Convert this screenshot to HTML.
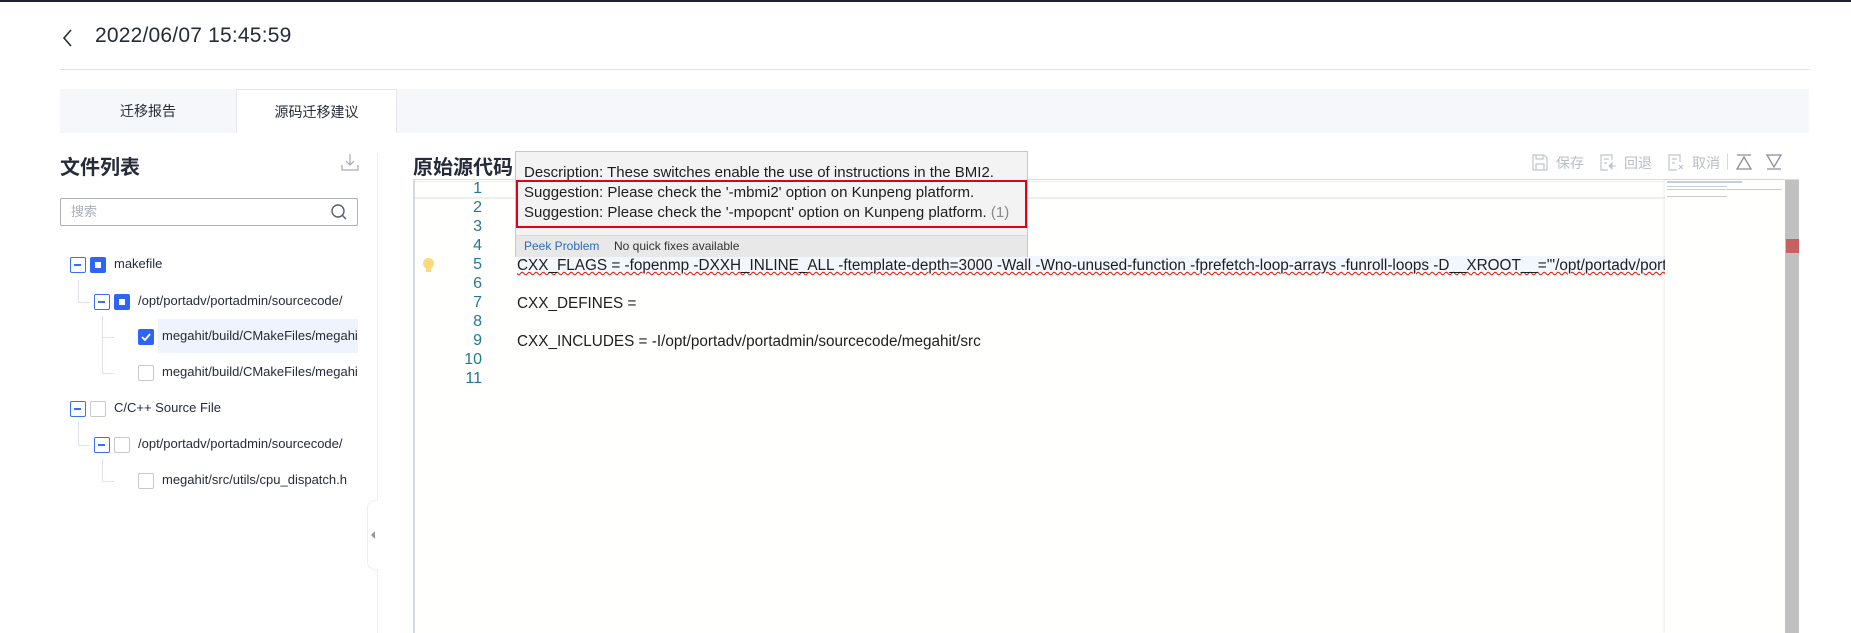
<!DOCTYPE html>
<html><head><meta charset="utf-8">
<style>
*{margin:0;padding:0;box-sizing:border-box}
body{width:1851px;height:633px;overflow:hidden;background:#fff;font-family:"Liberation Sans","Noto Sans CJK SC",sans-serif;color:#252b3a;position:relative}
.a{position:absolute}
.topbar{left:0;top:0;width:1851px;height:2px;background:#1b2430}
.title{left:95px;top:24px;font-size:21px;color:#252b3a;letter-spacing:0.2px}
.hr{left:60px;top:69px;width:1750px;height:1px;background:#dfe1e6}
.tabs{left:60px;top:89px;width:1749px;height:44px;background:#f5f7fb}
.tab{position:absolute;top:0;height:44px;line-height:44px;font-size:14px;text-align:center;color:#252b3a}
.h2{font-size:20px;font-weight:bold;color:#252b3a}
.search{left:60px;top:198px;width:298px;height:28px;border:1px solid #aeb1b8;border-radius:2px;font-size:13px;color:#adb0b8;padding-left:10px;line-height:26px}
.tree{font-size:13px;color:#252b3a;white-space:nowrap}
.mb{position:absolute;width:16px;height:16px;border:1.5px solid #3a6ff3;border-radius:2px;background:#fff}
.mb:after{content:"";position:absolute;left:3px;top:6px;width:7px;height:1.5px;background:#3a6ff3}
.fb{position:absolute;width:16px;height:16px;background:#2d65f5;border-radius:2px}
.fb:after{content:"";position:absolute;left:5px;top:5px;width:6px;height:6px;background:#fff}
.eb{position:absolute;width:16px;height:16px;border:1px solid #c6c9cf;border-radius:2px;background:#fff}
.ln{position:absolute;width:1px;background:#dfe1e6}
.lh{position:absolute;height:1px;background:#dfe1e6}
.editor{left:413px;top:179px;width:1386px;height:454px;background:#fffffd;border-left:2px solid #d5d9e6;border-top:1px solid #dcdde6}
.num{position:absolute;width:40px;text-align:right;font-size:16px;color:#237893;left:442px}
.code{position:absolute;left:517px;font-size:15.3px;color:#1e1e1e;white-space:nowrap}
.hover{left:515px;top:151px;width:513px;height:106px;background:#f3f3f3;border:1px solid #c8c8c8;font-size:15px;color:#1e1e1e}
.tb{font-size:14px;color:#b9bdc8}
</style></head><body>
<div class="a topbar"></div>
<svg class="a" style="left:62px;top:28px" width="12" height="20"><path d="M9 2 L2 10 L9 18" fill="none" stroke="#252b3a" stroke-width="1.6"/></svg>
<div class="a title">2022/06/07 15:45:59</div>
<div class="a hr"></div>
<div class="a tabs">
 <div class="tab" style="left:0;width:176px">迁移报告</div>
 <div class="tab" style="left:176px;width:161px;background:#fff;border:1px solid #e6e8ee;border-bottom:none">源码迁移建议</div>
</div>
<div class="a h2" style="left:60px;top:151px">文件列表</div>
<svg class="a" style="left:341px;top:153px" width="18" height="19"><path d="M9 1V12M5 8L9 12L13 8M1 12V17H17V12" fill="none" stroke="#a6a9b0" stroke-width="1.2"/></svg>
<div class="a" style="left:377px;top:153px;width:1px;height:480px;background:#eceef2"></div>
<div class="a search">搜索</div>
<svg class="a" style="left:330px;top:203px" width="18" height="18"><circle cx="8" cy="8" r="6" fill="none" stroke="#575d6c" stroke-width="1.4"/><path d="M12.5 12.5L16 16" stroke="#575d6c" stroke-width="1.4"/></svg>

<div class="a tree" style="left:0;top:0">
 <div class="mb" style="left:70px;top:257px"></div><div class="fb" style="left:90px;top:257px"></div>
 <div class="a" style="left:114px;top:256px">makefile</div>
 <div class="ln" style="left:78px;top:280px;height:22px"></div><div class="lh" style="left:78px;top:302px;width:12px"></div>
 <div class="mb" style="left:94px;top:294px"></div><div class="fb" style="left:114px;top:294px"></div>
 <div class="a" style="left:138px;top:293px">/opt/portadv/portadmin/sourcecode/</div>
 <div class="ln" style="left:102px;top:316px;height:57px"></div><div class="lh" style="left:102px;top:337px;width:12px"></div><div class="lh" style="left:102px;top:373px;width:12px"></div>
 <div class="a" style="left:158px;top:319px;width:200px;height:34px;background:#eef3fd"></div>
 <div class="a" style="left:138px;top:329px;width:16px;height:16px;background:#2d65f5;border-radius:2px"><svg width="16" height="16"><path d="M4 8L7 11L12 5" fill="none" stroke="#fff" stroke-width="1.8"/></svg></div>
 <div class="a" style="left:162px;top:328px;width:196px;overflow:hidden">megahit/build/CMakeFiles/megahit</div>
 <div class="eb" style="left:138px;top:365px"></div>
 <div class="a" style="left:162px;top:364px;width:196px;overflow:hidden">megahit/build/CMakeFiles/megahit</div>
 <div class="mb" style="left:70px;top:401px"></div><div class="eb" style="left:90px;top:401px"></div>
 <div class="a" style="left:114px;top:400px">C/C++ Source File</div>
 <div class="ln" style="left:78px;top:422px;height:23px"></div><div class="lh" style="left:78px;top:445px;width:12px"></div>
 <div class="mb" style="left:94px;top:437px"></div><div class="eb" style="left:114px;top:437px"></div>
 <div class="a" style="left:138px;top:436px">/opt/portadv/portadmin/sourcecode/</div>
 <div class="ln" style="left:102px;top:459px;height:22px"></div><div class="lh" style="left:102px;top:481px;width:12px"></div>
 <div class="eb" style="left:138px;top:473px"></div>
 <div class="a" style="left:162px;top:472px">megahit/src/utils/cpu_dispatch.h</div>
</div>
<div class="a" style="left:367px;top:500px;width:11px;height:70px;background:#fff;border:1px solid #eceef2;border-right:none;border-radius:8px 0 0 8px"></div>
<div class="a" style="left:371px;top:531px;width:0;height:0;border-top:4px solid transparent;border-bottom:4px solid transparent;border-right:4px solid #9096a3"></div>

<div class="a h2" style="left:413px;top:151px">原始源代码</div>
<svg class="a" style="left:1532px;top:154px" width="16" height="17"><path d="M1 1H12L15 4V16H1Z M4 1V5H11V1 M4 16V10H12V16" fill="none" stroke="#c0c4cf" stroke-width="1.2"/></svg>
<div class="a tb" style="left:1556px;top:153px">保存</div>
<svg class="a" style="left:1600px;top:154px" width="17" height="17"><path d="M12 6V1H1V16H8 M4 5H9 M4 9H7" fill="none" stroke="#c0c4cf" stroke-width="1.2"/><path d="M9 12L12 9V15Z M12 12H16" fill="#c0c4cf" stroke="#c0c4cf"/></svg>
<div class="a tb" style="left:1624px;top:153px">回退</div>
<svg class="a" style="left:1668px;top:154px" width="17" height="17"><path d="M12 8V1H1V16H9 M4 5H9 M4 9H7 M11 11L15 15M15 11L11 15" fill="none" stroke="#c0c4cf" stroke-width="1.2"/></svg>
<div class="a tb" style="left:1692px;top:153px">取消</div>
<div class="a" style="left:1727px;top:154px;width:1px;height:16px;background:#d5d8de"></div>
<svg class="a" style="left:1736px;top:154px" width="16" height="16"><path d="M1 1H15M8 3L15 15H1Z" fill="none" stroke="#8a8e99" stroke-width="1.3"/></svg>
<svg class="a" style="left:1766px;top:154px" width="16" height="16"><path d="M1 1H15L8 13Z M1 15H15" fill="none" stroke="#8a8e99" stroke-width="1.3"/></svg>

<div class="a editor"></div>
<div class="a" style="left:415px;top:181px;width:1250px;height:18px;border-top:1px solid #eeeeee;border-bottom:2px solid #eeeeee"></div>
<div class="a" style="left:517px;top:256px;width:1148px;height:20px;background:#f2f6fd"></div>
<div class="a" style="left:1665px;top:180px;width:120px;height:453px;background:#fffffd;box-shadow:-1px 0 3px rgba(0,0,0,0.08)"></div>
<div class="a" style="left:1667px;top:181px;width:75px;height:2px;background:#c8cce0"></div>
<div class="a" style="left:1667px;top:186px;width:60px;height:1px;background:#c8cce0"></div>
<div class="a" style="left:1667px;top:189px;width:115px;height:1px;background:#ccc"></div>
<div class="a" style="left:1667px;top:196px;width:60px;height:1px;background:#ccc"></div>
<div class="a" style="left:1785px;top:180px;width:14px;height:453px;background:#c1c1c1"></div>
<div class="a" style="left:1786px;top:239px;width:13px;height:14px;background:#c76060"></div>

<div class="num" style="top:180px">1</div>
<div class="num" style="top:199px">2</div>
<div class="num" style="top:218px">3</div>
<div class="num" style="top:237px">4</div>
<div class="num" style="top:256px">5</div>
<div class="num" style="top:275px">6</div>
<div class="num" style="top:294px">7</div>
<div class="num" style="top:313px">8</div>
<div class="num" style="top:332px">9</div>
<div class="num" style="top:351px">10</div>
<div class="num" style="top:370px">11</div>
<div class="a" style="left:423px;top:258px;width:11px;height:11px;border-radius:50%;background:#fcd97a"></div>
<div class="a" style="left:426px;top:268px;width:5px;height:4px;background:#fcd97a"></div>
<div class="a" style="left:517px;top:256px;width:1148px;height:21px;overflow:hidden">
 <div class="code" style="left:0;top:1px;text-decoration:underline wavy #e51400;text-decoration-thickness:1px">CXX_FLAGS =  -fopenmp -DXXH_INLINE_ALL -ftemplate-depth=3000 -Wall -Wno-unused-function -fprefetch-loop-arrays -funroll-loops -D__XROOT__='"/opt/portadv/portadmin/sourcecode/megahit"'</div>
</div>
<div class="code" style="top:295px">CXX_DEFINES =</div>
<div class="code" style="top:333px">CXX_INCLUDES = -I/opt/portadv/portadmin/sourcecode/megahit/src</div>

<div class="a hover">
 <div class="a" style="left:8px;top:12px;white-space:nowrap">Description: These switches enable the use of instructions in the BMI2.</div>
 <div class="a" style="left:0;top:28px;width:511px;height:48px;border:2.5px solid #e0001b"></div>
 <div class="a" style="left:8px;top:32px;white-space:nowrap">Suggestion: Please check the '-mbmi2' option on Kunpeng platform.</div>
 <div class="a" style="left:8px;top:52px;white-space:nowrap">Suggestion: Please check the '-mpopcnt' option on Kunpeng platform. <span style="color:#888">(1)</span></div>
 <div class="a" style="left:0;top:83px;width:511px;height:22px;background:#e8e8e8;border-top:1px solid #dadada;font-size:12px;line-height:21px">
  <span style="position:absolute;left:8px;color:#2a6db3">Peek Problem</span>
  <span style="position:absolute;left:98px;color:#333">No quick fixes available</span>
 </div>
</div>
</body></html>
